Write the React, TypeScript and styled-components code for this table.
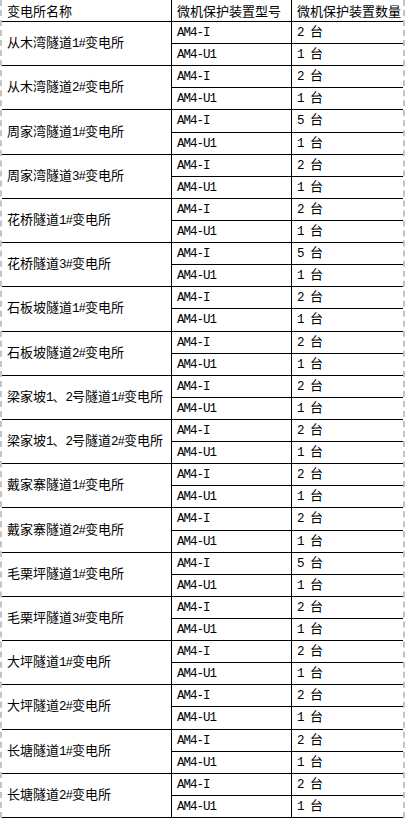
import React from "react";
import styled, { createGlobalStyle } from "styled-components";

const Global = createGlobalStyle`
  html, body { margin: 0; padding: 0; background: #ffffff; }
  body { font-family: "Noto Sans CJK SC", "Liberation Sans", sans-serif; color: #000; }
`;

const Sheet = styled.div`
  width: 405px;
  height: 818px;
  box-sizing: border-box;
  border-left: 2px dashed #c4c4c4;
  border-right: 2px dashed #c4c4c4;
  margin-right: 2px;
  background: #fff;
  overflow: hidden;
`;

const Table = styled.div`
  display: grid;
  grid-template-columns: 170px 120px 1fr;
  grid-template-rows: 22px repeat(36, 1fr);
  height: 818px;
`;

const Cell = styled.div<{ $span?: boolean; $divider?: boolean }>`
  display: flex;
  align-items: center;
  box-sizing: border-box;
  padding: 0 0 1px 5px;
  border-bottom: 1px solid #000;
  border-right: ${(p) => (p.$divider ? "1px solid #000" : "none")};
  grid-row: ${(p) => (p.$span ? "span 2" : "auto")};
  font-size: 13px;
  line-height: 1;
  white-space: nowrap;
  overflow: hidden;
`;

const Label = styled.span`
  display: inline-block;
  line-height: 15px;
`;

const Latin = styled.span`
  font-family: "Liberation Mono", monospace;
  font-size: 12.5px;
  letter-spacing: -1px;
`;

const Txt: React.FC<{ s: string }> = ({ s }) => (
  <Label>
    {s.split(/([\x20-\x7E]+)/).map((part, i) =>
      /^[\x20-\x7E]+$/.test(part) ? <Latin key={i}>{part}</Latin> : part ? <span key={i}>{part}</span> : null
    )}
  </Label>
);

const rows: [string, number][] = [
  ["从木湾隧道1#变电所", 2],
  ["从木湾隧道2#变电所", 2],
  ["周家湾隧道1#变电所", 5],
  ["周家湾隧道3#变电所", 2],
  ["花桥隧道1#变电所", 2],
  ["花桥隧道3#变电所", 5],
  ["石板坡隧道1#变电所", 2],
  ["石板坡隧道2#变电所", 2],
  ["梁家坡1、2号隧道1#变电所", 2],
  ["梁家坡1、2号隧道2#变电所", 2],
  ["戴家寨隧道1#变电所", 2],
  ["戴家寨隧道2#变电所", 2],
  ["毛栗坪隧道1#变电所", 5],
  ["毛栗坪隧道3#变电所", 2],
  ["大坪隧道1#变电所", 2],
  ["大坪隧道2#变电所", 2],
  ["长塘隧道1#变电所", 2],
  ["长塘隧道2#变电所", 2],
];

export default function App() {
  return (
    <>
      <Global />
      <Sheet>
        <Table>
          <Cell $divider><Txt s="变电所名称" /></Cell>
          <Cell $divider><Txt s="微机保护装置型号" /></Cell>
          <Cell><Txt s="微机保护装置数量" /></Cell>
          {rows.map(([name, n]) => (
            <React.Fragment key={name}>
              <Cell $span $divider>
                <Txt s={name} />
              </Cell>
              <Cell $divider>
                <Txt s="AM4-I" />
              </Cell>
              <Cell>
                <Txt s={`${n} 台`} />
              </Cell>
              <Cell $divider>
                <Txt s="AM4-U1" />
              </Cell>
              <Cell>
                <Txt s="1 台" />
              </Cell>
            </React.Fragment>
          ))}
        </Table>
      </Sheet>
    </>
  );
}
